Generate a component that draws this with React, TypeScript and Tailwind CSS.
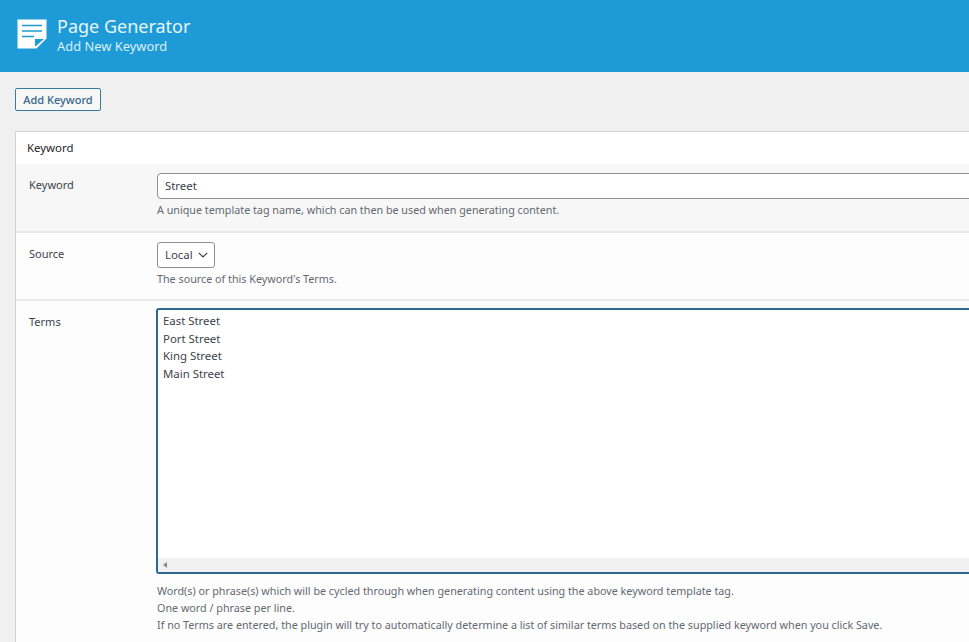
const font = "font-['Noto_Sans','Open_Sans',sans-serif]";

function PageIcon() {
    return (
        <svg width="30" height="30" viewBox="0 0 30 30" className="shrink-0">
            <path d="M0.5 0.5h29v19L19.5 29.5H0.5z" fill="#fff" />
            <path d="M5 6.5h20M5 12h20M5 17.5h12" stroke="#1e9ad6" strokeWidth="1.6" fill="none" />
            <path d="M18 20h9l-8 7h-1z" fill="#1e9ad6" />
        </svg>
    );
}

export default function App() {
    return (
        <div className={`${font} w-[969px] h-[642px] overflow-hidden bg-[#f0f0f1] text-[#3c434a]`}>
            {/* Header */}
            <div className="h-[72px] bg-[#1e9ad6] flex items-start pl-[17px] pt-[17px] gap-[10px]">
                <div className="pt-[2px]">
                    <PageIcon />
                </div>
                <div className="-mt-[3px]">
                    <div className="text-[18px] leading-[24px] text-[#e6f5fc]">Page Generator</div>
                    <div className="text-[12.9px] leading-[18px] -mt-[1px] text-[#d9f0fa]">Add New Keyword</div>
                </div>
            </div>

            <div className="pl-[15px]">
                {/* Add button */}
                <button
                    type="button"
                    className="mt-[16px] h-[23px] w-[86px] rounded-[2px] border border-[#3b7aa0] bg-[#f6f7f7] text-[11px] font-medium leading-[24px] text-[#38658a] flex items-center justify-center"
                >
                    Add Keyword
                </button>

                {/* Panel */}
                <div className="mt-[20px] w-[1100px] border border-[#cfd1d4] bg-white">
                    <div className="h-[32px] flex items-center pl-[11px] text-[11.4px] text-[#1d2327]">
                        Keyword
                    </div>

                    <div className="flex h-[69px] bg-[#f7f7f7] border-b-2 border-[#e8e8ea]">
                        <div className="w-[141px] pl-[13px] pt-[12px] text-[11px] leading-[18px]">Keyword</div>
                        <div className="flex-1 pt-[9px]">
                            <div className="h-[26px] rounded-[4px] border border-[#8c8f94] bg-white flex items-center pl-[7px] text-[11.4px]">
                                Street
                            </div>
                            <p className="mt-[2px] text-[10.75px] leading-[18px] text-[#646970]">
                                A unique template tag name, which can then be used when generating content.
                            </p>
                        </div>
                    </div>

                    <div className="flex h-[68px] border-b-2 border-[#e8e8ea] bg-[#fdfdfd]">
                        <div className="w-[141px] pl-[13px] pt-[12px] text-[11px] leading-[18px]">Source</div>
                        <div className="flex-1 pt-[9px]">
                            <div className="h-[26px] w-[58px] rounded-[3px] border border-[#8c8f94] bg-white flex items-center justify-between pl-[7px] pr-[6px] text-[11.4px]">
                                Local
                                <svg width="10" height="6" viewBox="0 0 10 6" fill="none">
                                    <path d="M0.8 0.8 5 5 9.2 0.8" stroke="#3c434a" strokeWidth="1.2" />
                                </svg>
                            </div>
                            <p className="mt-[2px] text-[10.75px] leading-[18px] text-[#646970]">
                                The source of this Keyword's Terms.
                            </p>
                        </div>
                    </div>

                    <div className="flex h-[400px] bg-[#fdfdfd]">
                        <div className="w-[141px] pl-[13px] pt-[12px] text-[11px] leading-[18px]">Terms</div>
                        <div className="flex-1 pt-[7px] -ml-px">
                            <div className="h-[266px] rounded-[3px] border-2 border-[#2c6a93] bg-white flex flex-col justify-between">
                                <div className="pl-[5px] pt-[2px] text-[11.4px] leading-[17.6px]">
                                    <div>East Street</div>
                                    <div>Port Street</div>
                                    <div>King Street</div>
                                    <div>Main Street</div>
                                </div>
                                <div className="h-[14px] bg-[#f1f1f1] flex items-center pl-[5px]">
                                    <svg width="4" height="6" viewBox="0 0 4 6">
                                        <path d="M4 0v6L0 3z" fill="#8a8a8a" />
                                    </svg>
                                </div>
                            </div>
                            <div className="mt-[9px] ml-px text-[10.75px] leading-[17px] text-[#646970]">
                                <p>Word(s) or phrase(s) which will be cycled through when generating content using the above keyword template tag.</p>
                                <p>One word / phrase per line.</p>
                                <p>If no Terms are entered, the plugin will try to automatically determine a list of similar terms based on the supplied keyword when you click Save.</p>
                            </div>
                        </div>
                    </div>
                </div>
            </div>
        </div>
    );
}
